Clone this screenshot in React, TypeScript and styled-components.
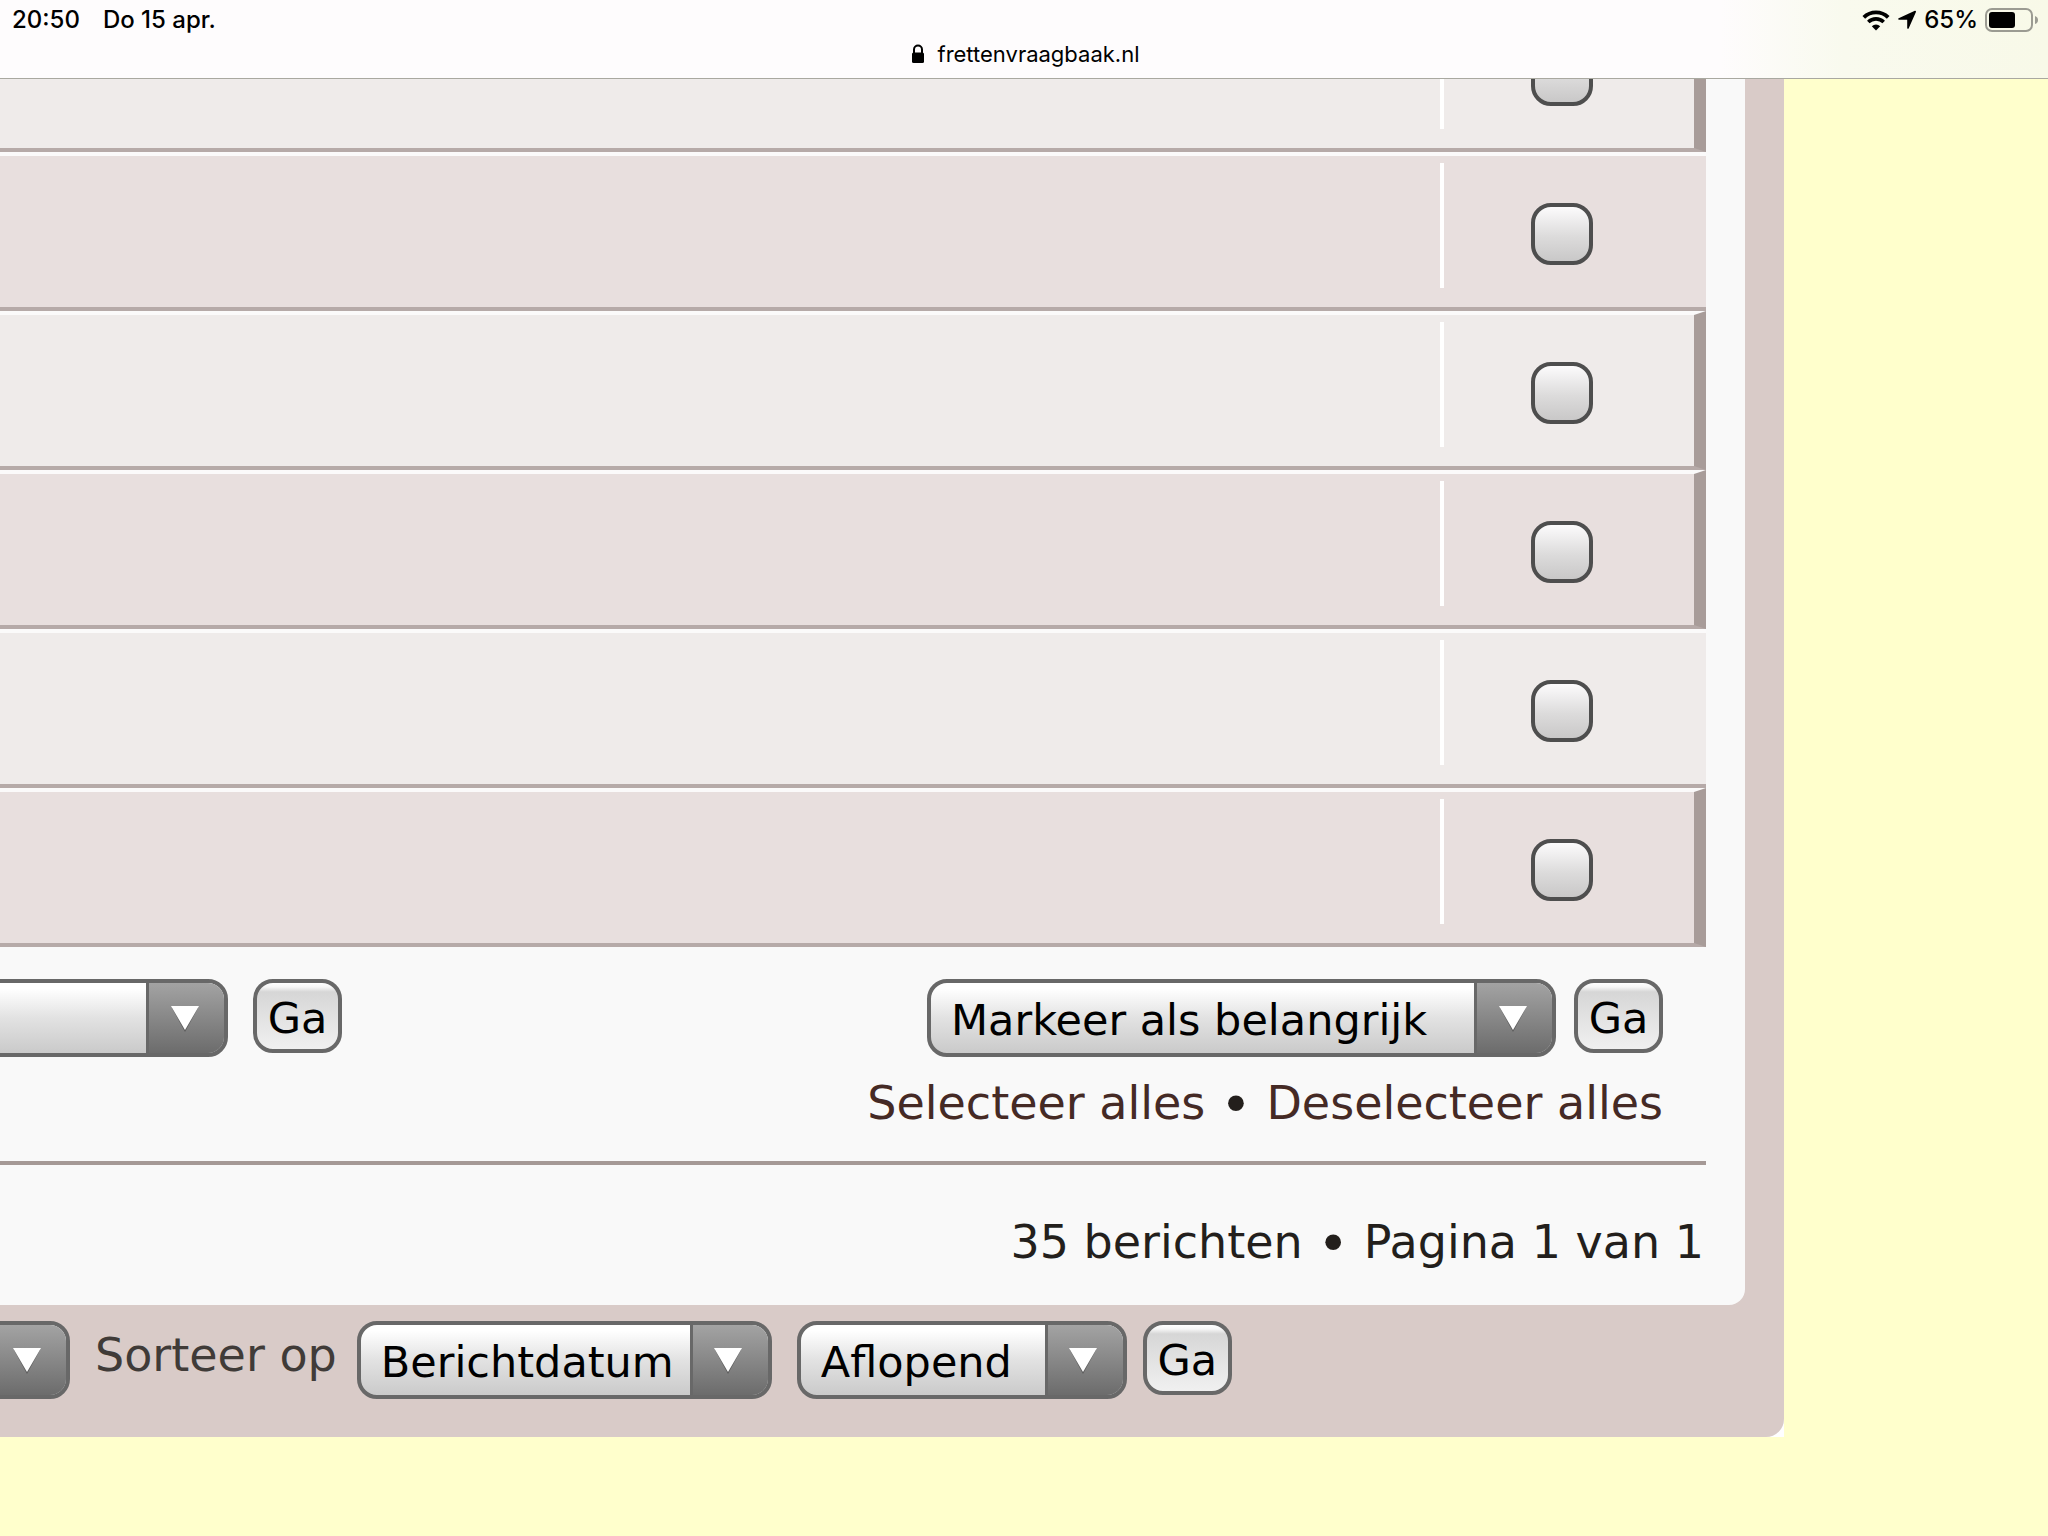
import React from "react";
import styled, { createGlobalStyle } from "styled-components";

const GlobalStyle = createGlobalStyle`
  *, *::before, *::after { box-sizing: border-box; }
  body {
    margin: 0;
    background: #ffffcc;
    font-family: "DejaVu Sans", Verdana, sans-serif;
    color: #231f1c;
  }
`;

const Page = styled.div`
  min-height: 100vh;
  overflow: hidden;
`;

/* ---------- Browser bar ---------- */

const BrowserBar = styled.header`
  display: flex;
  flex-direction: column;
  height: 79px;
  padding: 4px 9px 0 12px;
  border-bottom: 1px solid #a9a8a0;
  background: linear-gradient(90deg, #fefcfd 0%, #fefcfd 84%, #f9faee 90%, #f8f9e8 100%);
  font-family: Inter, sans-serif;
  line-height: 32px;
  color: #000;
`;

const StatusLine = styled.div`
  display: flex;
  justify-content: space-between;
  font-size: 24px;
  font-weight: 500;
`;

const StatusGroup = styled.div<{ $gap: number }>`
  display: flex;
  align-items: center;
  gap: ${(p) => p.$gap}px;
`;

const AddressLine = styled.div`
  display: flex;
  justify-content: center;
  align-items: center;
  gap: 12px;
  padding-top: 2px;
  font-size: 22px;
`;

/* ---------- Message list ---------- */

const Viewport = styled.div`
  overflow: hidden;
`;

const Panel = styled.main`
  margin: 0 264px 0 -240px;
  background: linear-gradient(#fff, #fff) right bottom / 20px 20px no-repeat;
`;

const PanelBody = styled.div`
  padding: 0 39px 38px;
  border-bottom-right-radius: 18px;
  background: #d9cbc8;
`;

const Sheet = styled.section`
  padding: 0 39px 28px;
  border-bottom-right-radius: 16px;
  background: #f9f9f9;
`;

const MessageList = styled.ul`
  margin: -86px 0 0;
  padding: 0;
  list-style: none;
`;

const MessageRow = styled.li<{ $shade: "light" | "dark"; $bevel: boolean }>`
  display: flex;
  justify-content: flex-end;
  height: 159px;
  padding: 7px 0 15px;
  border-top: 4px solid #fbfafa;
  border-bottom: 4px solid #b6aaa8;
  border-right: ${(p) => (p.$bevel ? 12 : 0)}px solid #a89c99;
  background: ${(p) => (p.$shade === "light" ? "#efebea" : "#e8dfde")};
`;

const MarkCell = styled.div<{ $bevel: boolean }>`
  display: flex;
  align-items: center;
  width: ${(p) => (p.$bevel ? 254 : 266)}px;
  padding: 16px 0 0 87px;
  height: 125px;
  border-left: 4px solid #fff;
`;

const MarkBox = styled.input`
  appearance: none;
  width: 62px;
  height: 62px;
  margin: 0;
  border: 4px solid #4e4e4e;
  border-radius: 20px;
  background: linear-gradient(#fcfbfc, #dcdbdb 55%, #c9c8c8);
`;

/* ---------- Controls ---------- */

const Actions = styled.div`
  display: flex;
  justify-content: space-between;
  align-items: flex-start;
  padding: 32px 43px 11px 0;
`;

const Controls = styled.form<{ $gap: number }>`
  display: flex;
  align-items: flex-start;
  gap: ${(p) => p.$gap}px;
`;

const SelectFrame = styled.div<{ $width: number }>`
  display: grid;
  grid-template-columns: 1fr 82px;
  width: ${(p) => p.$width}px;
  height: 78px;
`;

const SelectField = styled.select`
  appearance: none;
  grid-area: 1 / 1 / 2 / 3;
  width: 100%;
  margin: 0;
  padding: 4px 86px 0 20px;
  border: 4px solid #686868;
  border-radius: 20px;
  background: linear-gradient(#fff 8%, #e2e2e2 50%, #cacaca);
  font-family: inherit;
  font-size: 43px;
  color: #000;
`;

const SelectArrow = styled.span`
  grid-area: 1 / 2 / 2 / 3;
  z-index: 1;
  display: flex;
  justify-content: center;
  align-items: center;
  margin: 4px 4px 4px 0;
  padding: 2px 4px 0 0;
  border-left: 3px solid #686868;
  border-radius: 0 16px 16px 0;
  background: linear-gradient(#a3a3a3, #6c6c6c);
  pointer-events: none;
`;

const GoButton = styled.button`
  width: 89px;
  height: 74px;
  padding: 4px 0 0;
  border: 4px solid #686868;
  border-radius: 20px;
  background: linear-gradient(#fff 0, #f6f6f6 4px, #d6d6d6 9px, #e0e0e0 45%, #f0f0f0);
  font-family: inherit;
  font-size: 43px;
  line-height: 50px;
  color: #000;
`;

const TextLine = styled.div<{ $inset: number }>`
  padding-right: ${(p) => p.$inset}px;
  font-size: 46px;
  line-height: 70px;
  text-align: right;
  white-space: nowrap;
`;

const Bullet = styled.span`
  font-size: 54px;
  line-height: 1;
  vertical-align: -4px;
`;

const SheetLink = styled.a`
  color: #452a25;
  text-decoration: none;
`;

const Divider = styled.hr`
  height: 4px;
  margin: 23px 0 42px;
  border: 0;
  background: #a59996;
`;

const SortBar = styled.form`
  display: flex;
  align-items: flex-start;
  padding-top: 16px;
`;

const SortLabel = styled.label`
  margin: 0 20px 0 25px;
  font-size: 46px;
  line-height: 68px;
  color: #403b38;
  white-space: nowrap;
`;

const SortGroup = styled.div`
  display: flex;
  align-items: flex-start;
  gap: 16px;
  margin-left: 25px;
`;

type PickProps = { id: string; label?: string; width: number; option?: string };

function Pick({ id, label, width, option }: PickProps) {
  return (
    <SelectFrame $width={width}>
      <SelectField id={id} aria-label={label}>
        <option>{option}</option>
      </SelectField>
      <SelectArrow aria-hidden="true">
        <svg width="30" height="28" viewBox="0 0 30 28">
          <path d="M2 3H28L15 27Z" fill="#5c5c5c" />
          <path d="M1 1H29L15 25Z" fill="#fff" />
        </svg>
      </SelectArrow>
    </SelectFrame>
  );
}

const messages: { shade: "light" | "dark"; bevel: boolean }[] = [
  { shade: "light", bevel: true },
  { shade: "dark", bevel: false },
  { shade: "light", bevel: true },
  { shade: "dark", bevel: true },
  { shade: "light", bevel: false },
  { shade: "dark", bevel: true },
];

const WifiIcon = () => (
  <svg width="28" height="21" viewBox="0 0 28 21" fill="none" stroke="#000" aria-hidden="true">
    <path d="M1.8 7.4A17.4 17.4 0 0 1 26.2 7.4" strokeWidth="3.8" />
    <path d="M6.3 12A11 11 0 0 1 21.7 12" strokeWidth="3.6" />
    <path d="M14 20.6L9.8 16.2A6 6 0 0 1 18.2 16.2Z" fill="#000" stroke="none" />
  </svg>
);

const LocationIcon = () => (
  <svg width="20" height="20" viewBox="0 0 20 20" aria-hidden="true">
    <path
      d="M18.2 1.6L11 18V9.8Q11 9 10.2 9H2Z"
      fill="#000"
      stroke="#000"
      strokeWidth="1.6"
      strokeLinejoin="round"
    />
  </svg>
);

const BatteryIcon = () => (
  <svg width="54" height="24" viewBox="0 0 54 24" aria-hidden="true">
    <rect x="1" y="1" width="46" height="22" rx="6" fill="none" stroke="#9b9b92" strokeWidth="2" />
    <rect x="4" y="4" width="26" height="16" rx="3" fill="#000" />
    <path d="M50 8Q53 9 53 12T50 16Z" fill="#9b9b92" />
  </svg>
);

const LockIcon = () => (
  <svg width="14" height="20" viewBox="0 0 14 20" aria-hidden="true">
    <path d="M3 9V5.5a4 4 0 0 1 8 0V9" fill="none" stroke="#000" strokeWidth="2" />
    <rect x="1" y="8.5" width="12" height="10.5" rx="1.5" fill="#000" />
  </svg>
);

export default function App() {
  return (
    <Page>
      <GlobalStyle />
      <BrowserBar>
        <StatusLine>
          <StatusGroup $gap={23}>
            <span>20:50</span>
            <span>Do 15 apr.</span>
          </StatusGroup>
          <StatusGroup $gap={7}>
            <WifiIcon />
            <LocationIcon />
            <span>65%</span>
            <BatteryIcon />
          </StatusGroup>
        </StatusLine>
        <AddressLine>
          <LockIcon />
          <span>frettenvraagbaak.nl</span>
        </AddressLine>
      </BrowserBar>

      <Viewport>
        <Panel>
          <PanelBody>
            <Sheet>
              <MessageList>
                {messages.map((m, i) => (
                  <MessageRow key={i} $shade={m.shade} $bevel={m.bevel}>
                    <MarkCell $bevel={m.bevel}>
                      <MarkBox type="checkbox" aria-label={`Bericht ${i + 1}`} />
                    </MarkCell>
                  </MessageRow>
                ))}
              </MessageList>

              <Actions>
                <Controls $gap={25}>
                  <Pick id="export" label="Exporteren" width={390} />
                  <GoButton type="button">Ga</GoButton>
                </Controls>
                <Controls $gap={18}>
                  <Pick id="mark" label="Markering" width={629} option="Markeer als belangrijk" />
                  <GoButton type="button">Ga</GoButton>
                </Controls>
              </Actions>
              <TextLine $inset={43}>
                <SheetLink href="#alles">Selecteer alles</SheetLink> <Bullet>•</Bullet>{" "}
                <SheetLink href="#geen">Deselecteer alles</SheetLink>
              </TextLine>

              <Divider />
              <TextLine $inset={2}>
                35 berichten <Bullet>•</Bullet> Pagina 1 van 1
              </TextLine>
            </Sheet>

            <SortBar>
              <Pick id="period" label="Periode" width={271} />
              <SortLabel htmlFor="sort">Sorteer op</SortLabel>
              <Pick id="sort" width={415} option="Berichtdatum" />
              <SortGroup>
                <Pick id="direction" label="Richting" width={330} option="Aflopend" />
                <GoButton type="button">Ga</GoButton>
              </SortGroup>
            </SortBar>
          </PanelBody>
        </Panel>
      </Viewport>
    </Page>
  );
}
